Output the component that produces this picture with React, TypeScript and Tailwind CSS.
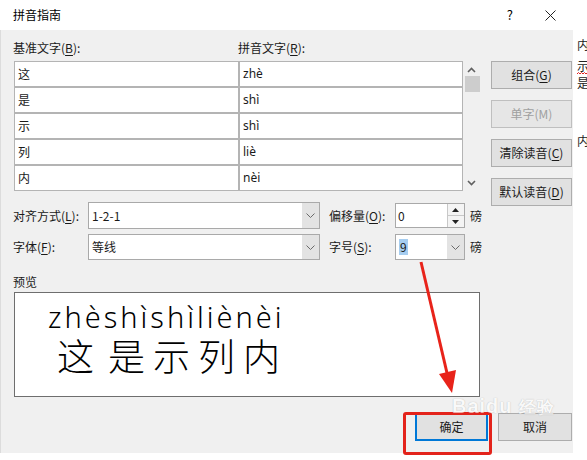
import React from "react";

function U({ c }: { c: string }) {
  return <span className="underline underline-offset-[2px] decoration-1">{c}</span>;
}

function ChevDown({ color = "#606060" }: { color?: string }) {
  return (
    <svg width="9" height="5" viewBox="0 0 9 5">
      <path d="M0.5 0.5 L4.5 4.5 L8.5 0.5" fill="none" stroke={color} strokeWidth="1" />
    </svg>
  );
}

function ScrollArrow({ up }: { up?: boolean }) {
  return (
    <svg width="9" height="6" viewBox="0 0 9 6">
      <path
        d={up ? "M1 5 L4.5 1.5 L8 5" : "M1 1 L4.5 4.5 L8 1"}
        fill="none"
        stroke="#606060"
        strokeWidth="1.6"
      />
    </svg>
  );
}

const rows: [string, string][] = [
  ["这", "zhè"],
  ["是", "shì"],
  ["示", "shì"],
  ["列", "liè"],
  ["内", "nèi"],
];

function Combo({ value, w }: { value: React.ReactNode; w: string }) {
  return (
    <div className={`flex h-full ${w} border border-[#a9a9a9] bg-white`}>
      <div className="flex flex-1 items-center pl-[3px]">{value}</div>
      <div className="flex w-[17px] items-center justify-center bg-[#e3e3e3]">
        <ChevDown color="#6a6a6a" />
      </div>
    </div>
  );
}

export default function App() {
  return (
    <div className="relative flex h-[460px] w-[587px] overflow-hidden bg-white font-['Noto_Sans_CJK_SC','Microsoft_YaHei',sans-serif] text-[12px] text-[#1a1a1a]">
      {/* dialog */}
      <div className="flex w-[573px] flex-col">
        {/* title bar */}
        <div className="flex h-[30px] items-center bg-white pl-[13px] pr-[13px]">
          <span className="text-[12px] text-black">拼音指南</span>
          <span className="ml-auto mr-[32px] text-[13px] text-black">?</span>
          <svg width="11" height="11" viewBox="0 0 11 11" className="mr-[4px]">
            <path d="M0.5 0.5 L10.5 10.5 M10.5 0.5 L0.5 10.5" stroke="#222" strokeWidth="1" />
          </svg>
        </div>
        {/* body */}
        <div className="h-[423px] border-l border-[#dcdcdc] bg-[#f0f0f0] pl-[12px] pr-px pt-[10px]">
          <div className="flex">
            {/* left column */}
            <div className="flex w-[469px] flex-col">
              <div className="flex h-[16px] items-center leading-[16px]">
                <span className="w-[225px]">
                  基准文字(<U c="B" />):
                </span>
                <span>
                  拼音文字(<U c="R" />):
                </span>
              </div>
              {/* table */}
              <div className="ml-px mt-[5px] flex">
                <div className="grid w-[449px] grid-cols-[225px_224px]">
                  {rows.map(([a, b], i) => (
                    <React.Fragment key={i}>
                      <div className="flex h-[26px] items-center border border-[#b4b4b4] bg-white pl-[3px]">
                        {a}
                      </div>
                      <div className="flex h-[26px] items-center border border-[#b4b4b4] bg-white pl-[3px] font-['Noto_Sans',sans-serif]">
                        {b}
                      </div>
                    </React.Fragment>
                  ))}
                </div>
                <div className="flex h-[130px] w-[17px] flex-col items-center">
                  <div className="mt-[6px]">
                    <ScrollArrow up />
                  </div>
                  <div className="ml-[2px] mt-[3px] h-[16px] w-[15px] bg-[#cdcdcd]" />
                  <div className="mt-auto mb-[5px]">
                    <ScrollArrow />
                  </div>
                </div>
              </div>
              {/* row 1 */}
              <div className="mt-[11px] flex h-[27px] items-center">
                <span className="w-[75px]">
                  对齐方式(<U c="L" />):
                </span>
                <Combo value="1-2-1" w="w-[232px]" />
                <span className="ml-[9px] w-[66px]">
                  偏移量(<U c="O" />):
                </span>
                <div className="flex h-[25px] w-[70px] border border-[#a9a9a9] bg-white">
                  <div className="flex flex-1 items-center pl-[2px]">0</div>
                  <div className="flex w-[17px] flex-col border-l border-[#c8c8c8]">
                    <div className="flex flex-1 items-center justify-center border-b border-[#c8c8c8] bg-[#f4f4f4]">
                      <svg width="7" height="4" viewBox="0 0 7 4">
                        <path d="M0 4 L3.5 0 L7 4 Z" fill="#222" />
                      </svg>
                    </div>
                    <div className="flex flex-1 items-center justify-center bg-[#f4f4f4]">
                      <svg width="7" height="4" viewBox="0 0 7 4">
                        <path d="M0 0 L3.5 4 L7 0 Z" fill="#222" />
                      </svg>
                    </div>
                  </div>
                </div>
                <span className="ml-[5px]">磅</span>
              </div>
              {/* row 2 */}
              <div className="mt-[5px] flex h-[26px] items-center">
                <span className="w-[75px]">
                  字体(<U c="F" />):
                </span>
                <Combo value="等线" w="w-[232px]" />
                <span className="ml-[9px] w-[66px]">
                  字号(<U c="S" />):
                </span>
                <Combo
                  value={<span className="bg-[#a6cdf0] px-px leading-[16px]">9</span>}
                  w="w-[70px]"
                />
                <span className="ml-[5px]">磅</span>
              </div>
              {/* preview */}
              <div className="mt-[14px] h-[16px] leading-[16px]">预览</div>
              <div className="ml-px mt-[2px] flex h-[105px] w-[466px] flex-col border border-[#6e6e6e] bg-white pl-[33px] pt-[9px] text-black">
                <div className="font-['Noto_Sans',sans-serif] text-[29px] font-light leading-[29px] tracking-[3px]">
                  zhèshìshìliènèi
                </div>
                <div className="ml-[9px] mt-[6px] text-[37px] font-light leading-[37px] tracking-[8px]">
                  <span className="mr-[6px]">这</span>是示列内
                </div>
              </div>
            </div>
            {/* right buttons */}
            <div className="ml-[9px] flex w-[82px] flex-col gap-[11px] pt-[21px]">
              <div className="flex h-[28px] items-center justify-center border border-[#adadad] bg-[#e1e1e1]">
                组合(<U c="G" />)
              </div>
              <div className="flex h-[28px] items-center justify-center border border-[#bfbfbf] bg-[#e6e6e6] text-[#a0a0a0]">
                单字(M)
              </div>
              <div className="flex h-[28px] items-center justify-center border border-[#adadad] bg-[#e1e1e1]">
                清除读音(<U c="C" />)
              </div>
              <div className="flex h-[28px] items-center justify-center border border-[#adadad] bg-[#e1e1e1]">
                默认读音(<U c="D" />)
              </div>
            </div>
          </div>
          {/* bottom buttons */}
          <div className="mt-[16px] flex h-[28px] justify-end gap-[10px]">
            <div className="flex w-[73px] items-center justify-center border-2 border-[#0078d7] bg-[#e1e1e1]">
              确定
            </div>
            <div className="flex w-[74px] items-center justify-center border border-[#adadad] bg-[#e1e1e1]">
              取消
            </div>
          </div>
        </div>
      </div>
      {/* document behind, clipped */}
      <div className="flex w-[14px] flex-col overflow-hidden bg-white pl-[4px] text-[12px] leading-[12px] text-[#222]">
        <span className="mt-[39px] whitespace-nowrap">内</span>
        <span className="mt-[9px] whitespace-nowrap">示</span>
        <svg width="12" height="3" viewBox="0 0 12 3" className="mt-[0px] shrink-0">
          <path d="M0 2 L1.5 0.5 L3 2 L4.5 0.5 L6 2 L7.5 0.5 L9 2 L10.5 0.5 L12 2" fill="none" stroke="#e02020" strokeWidth="1" />
        </svg>
        <span className="mt-[2px] whitespace-nowrap">是</span>
        <span className="mt-[46px] whitespace-nowrap">内</span>
      </div>

      {/* annotation overlays */}
      <div className="absolute left-[403px] top-[412px] h-[43px] w-[89px] rounded-[3px] border-[3px] border-[#e3231b]" />
      <svg className="pointer-events-none absolute left-0 top-0" width="587" height="460" viewBox="0 0 587 460">
        <line x1="421" y1="262" x2="447" y2="373" stroke="#e8231a" strokeWidth="3" />
        <polygon points="439,374 456,370 452,393" fill="#e8231a" />
      </svg>
      {/* watermark */}
      <div className="pointer-events-none absolute left-[452px] top-[396px] text-white opacity-60">
        <div className="font-['Liberation_Sans',sans-serif] text-[20px] font-bold leading-[20px] tracking-[1px] [text-shadow:0_0_1px_#888]">
          Baidu <span className="text-[17px]">经验</span>
        </div>
      </div>
    </div>
  );
}
